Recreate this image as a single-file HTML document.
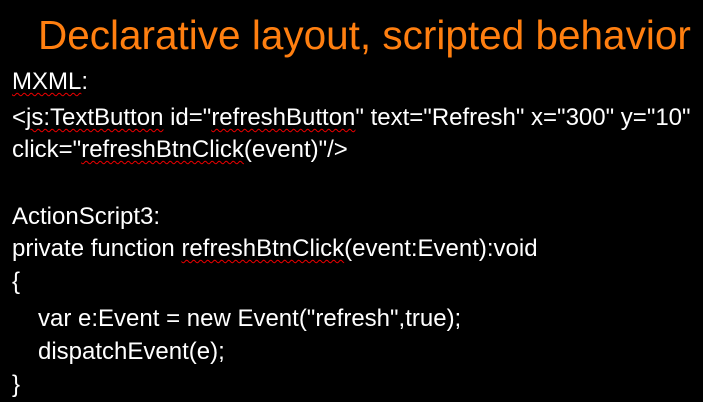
<!DOCTYPE html>
<html><head><meta charset="utf-8"><style>
body{margin:0;width:703px;height:402px;background:#000;overflow:hidden;font-family:"Liberation Sans",Arial,sans-serif;color:#fff;position:relative}
.t{position:absolute;left:38px;top:12px;font-size:40.5px;line-height:46px;color:#ff7f10;white-space:nowrap}
.l{position:absolute;left:12px;font-size:24px;white-space:nowrap;line-height:28px}
.w{text-decoration:underline wavy #e00;text-decoration-thickness:1px;text-underline-offset:3px}
</style></head><body>
<div class="t">Declarative layout, scripted behavior</div>
<div class="l" style="top:68px"><span class="w">MXML</span>:</div>
<div class="l" style="top:104px">&lt;<span class="w">js:TextButton</span> id="<span class="w">refreshButton</span>" text="Refresh" x="300" y="10"</div>
<div class="l" style="top:136px">click="<span class="w">refreshBtnClick</span>(event)"/&gt;</div>
<div class="l" style="top:203px">ActionScript3:</div>
<div class="l" style="top:235px">private function <span class="w">refreshBtnClick</span>(event:Event):void</div>
<div class="l" style="top:268px">{</div>
<div class="l" style="top:305px;left:38px">var e:Event = new Event("refresh",true);</div>
<div class="l" style="top:338px;left:38px">dispatchEvent(e);</div>
<div class="l" style="top:371px">}</div>
</body></html>
